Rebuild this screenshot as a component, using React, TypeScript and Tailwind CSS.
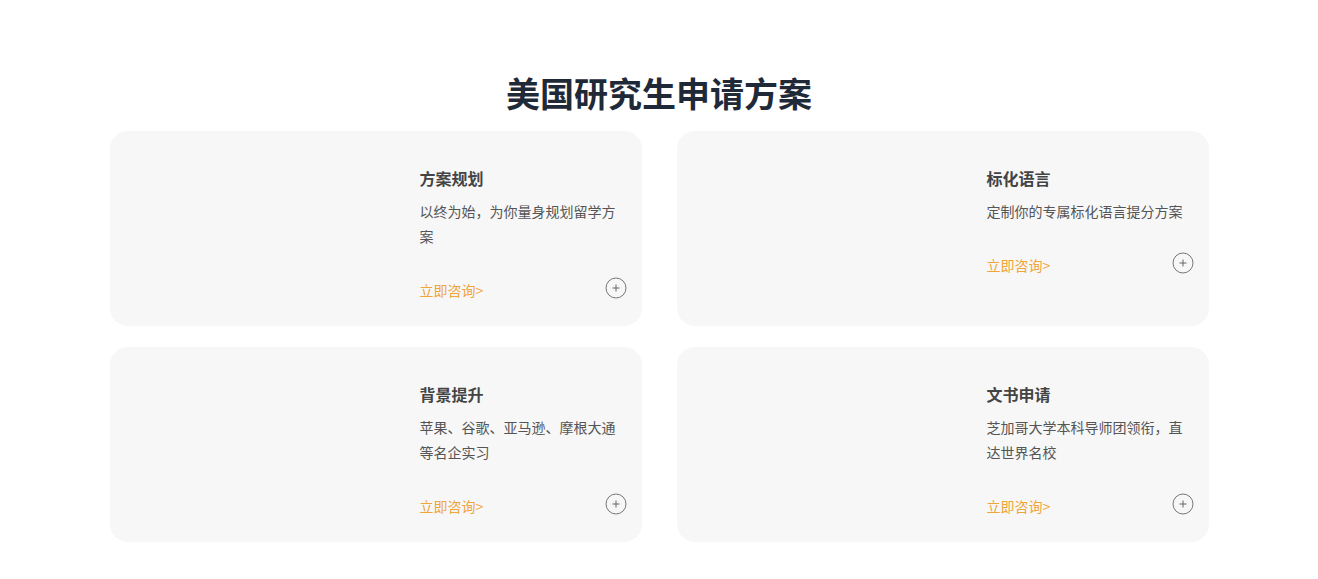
const plans = [
  { title: '方案规划', desc: '以终为始，为你量身规划留学方案' },
  { title: '标化语言', desc: '定制你的专属标化语言提分方案' },
  { title: '背景提升', desc: '苹果、谷歌、亚马逊、摩根大通等名企实习' },
  { title: '文书申请', desc: '芝加哥大学本科导师团领衔，直达世界名校' },
];

function PlusCircle() {
  return (
    <svg width="22" height="22" viewBox="0 0 22 22" fill="none" className="shrink-0">
      <circle cx="11" cy="11" r="10" stroke="#777" strokeWidth="1" />
      <path d="M7.5 11h7M11 7.5v7" stroke="#666" strokeWidth="1" />
    </svg>
  );
}

function PlanCard({ title, desc }: { title: string; desc: string }) {
  return (
    <div className="flex h-[195px] rounded-[18px] bg-[#f7f7f7]">
      {/* image area (empty in the screenshot) */}
      <div className="w-[310px] shrink-0" />
      <div className="w-[207px] pt-[35px]">
        <h3 className="text-[16px] leading-[24px] font-bold text-[#444]">{title}</h3>
        <p className="mt-[9px] text-[14px] leading-[25px] text-[#555]">{desc}</p>
        <div className="mt-[31px] flex items-center justify-between">
          <a className="text-[14px] leading-[20px] text-[#efa53a]" href="#">
            立即咨询&gt;
          </a>
          <span className="-mt-[5px]">
            <PlusCircle />
          </span>
        </div>
      </div>
    </div>
  );
}

export default function App() {
  return (
    <div
      className="min-h-[579px] bg-white"
      style={{ fontFamily: '"Noto Sans CJK SC", "Liberation Sans", sans-serif' }}
    >
      <div className="mx-auto w-[1099px] pt-[70px]">
        <h2 className="text-center text-[34px] leading-[46px] font-bold text-[#1f2937]">
          美国研究生申请方案
        </h2>
        <div className="mt-[15px] grid grid-cols-2 gap-x-[35px] gap-y-[21px]">
          {plans.map(p => (
            <PlanCard key={p.title} title={p.title} desc={p.desc} />
          ))}
        </div>
      </div>
    </div>
  );
}
